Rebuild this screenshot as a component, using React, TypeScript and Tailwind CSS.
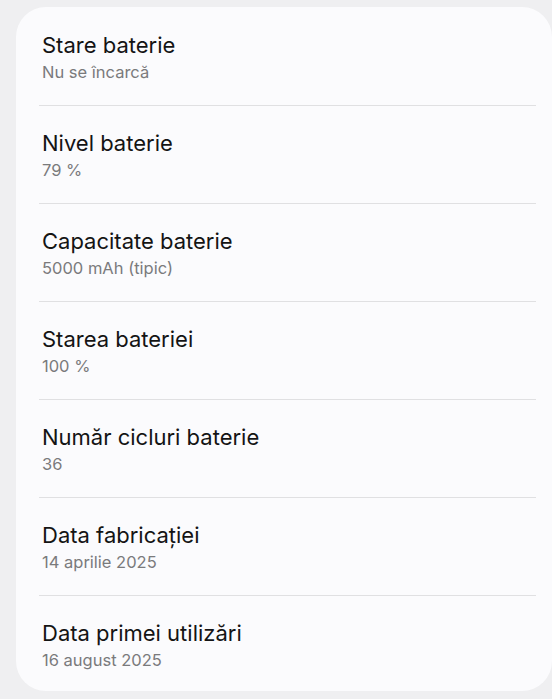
import React from "react";

const rows: [string, string][] = [
  ["Stare baterie", "Nu se încarcă"],
  ["Nivel baterie", "79 %"],
  ["Capacitate baterie", "5000 mAh (tipic)"],
  ["Starea bateriei", "100 %"],
  ["Număr cicluri baterie", "36"],
  ["Data fabricației", "14 aprilie 2025"],
  ["Data primei utilizări", "16 august 2025"],
];

export default function App() {
  return (
    <div
      className="w-[552px] h-[699px] bg-[#efeff1] overflow-hidden pt-[7px] pl-[16px]"
      style={{ fontFamily: "Inter, Roboto, 'Noto Sans', sans-serif" }}
    >
      <div className="w-[536px] h-[684px] bg-[#fbfbfd] rounded-[30px] flex flex-col">
        {rows.map(([t, s], i) => (
          <div key={t} className="flex flex-col">
            <div className={`flex flex-col pl-[26px] ${i === 0 ? "h-[98px] pt-[24px]" : "h-[97px] pt-[23px]"}`}>
              <div className="text-[22px] leading-[28px] text-[#141414]">{t}</div>
              <div className="text-[16.5px] leading-[22px] mt-[2px] text-[#7a7a7c]">{s}</div>
            </div>
            {i < rows.length - 1 && <div className="h-px bg-[#e0e0e2] ml-[23px] mr-[16px]" />}
          </div>
        ))}
      </div>
    </div>
  );
}
